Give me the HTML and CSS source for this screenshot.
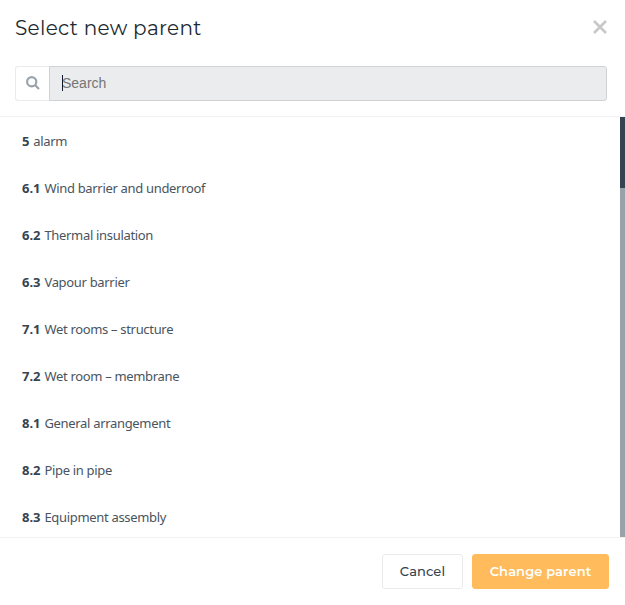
FILE: index.html
```
<!DOCTYPE html>
<html lang="en">
<head>
<meta charset="utf-8"/>
<title>Select new parent</title>
<link rel="stylesheet" href="styles.css">
</head>
<body>
<div class="modal">
	<div class="modal-header">
		<div class="modal-title">
			<h1>Select new parent</h1>
			<button class="close" aria-label="Close">
				<svg width="14" height="14" viewBox="0 0 14 14"><path d="M1 1L13 13M13 1L1 13"/></svg>
			</button>
		</div>
		<div class="search">
			<label class="search-icon" for="search">
				<svg width="14" height="14" viewBox="0 0 14 14"><circle cx="5.7" cy="5.7" r="4.6"/><path d="M9.2 9.2L13 13"/></svg>
			</label>
			<div class="search-field">
				<input id="search" type="text" placeholder="Search"/>
				<span class="caret"></span>
			</div>
		</div>
	</div>
	<div class="modal-body">
		<ul class="list">
			<li><b>5</b> <span>alarm</span></li>
			<li><b>6.1</b> <span>Wind barrier and underroof</span></li>
			<li><b>6.2</b> <span>Thermal insulation</span></li>
			<li><b>6.3</b> <span>Vapour barrier</span></li>
			<li><b>7.1</b> <span>Wet rooms – structure</span></li>
			<li><b>7.2</b> <span>Wet room – membrane</span></li>
			<li><b>8.1</b> <span>General arrangement</span></li>
			<li><b>8.2</b> <span>Pipe in pipe</span></li>
			<li><b>8.3</b> <span>Equipment assembly</span></li>
		</ul>
		<div class="scrollbar"><div class="thumb"></div></div>
	</div>
	<div class="modal-footer">
		<button class="btn btn-cancel">Cancel</button>
		<button class="btn btn-primary">Change parent</button>
	</div>
</div>
</body>
</html>
```
FILE: styles.css
```
* {
	box-sizing: border-box;
}
body {
	margin: 0;
	background: #fff;
	color: #364350;
	font-family: "Segoe UI", "Noto Sans", sans-serif;
	font-size: 13px;
}
.modal {
	display: flex;
	flex-direction: column;
	height: 605px;
	overflow: hidden;
}
.modal-header {
	height: 117px;
	padding: 14px 18px 0 15px;
	border-bottom: 1px solid #f0f1f2;
}
.modal-title {
	display: flex;
	justify-content: space-between;
	height: 52px;
}
h1 {
	margin: 0;
	color: #212930;
	font-family: Montserrat, Inter, sans-serif;
	font-size: 20px;
	font-weight: 400;
	line-height: 28px;
	letter-spacing: 0.3px;
}
.close {
	height: 14px;
	margin: 6px 0 0;
	padding: 0;
	border: 0;
	background: none;
}
.close svg {
	display: block;
	fill: none;
	stroke: #c8c8c8;
	stroke-width: 2.6;
}
.search {
	display: flex;
	height: 35px;
}
.search-icon {
	display: flex;
	align-items: center;
	justify-content: center;
	width: 34px;
	padding-bottom: 2px;
	border: 1px solid #e9ebec;
	border-right: 0;
	border-radius: 3px 0 0 3px;
}
.search-icon svg {
	fill: none;
	stroke: #9ba3aa;
	stroke-width: 2.2;
}
.search-field {
	position: relative;
	flex: 1;
}
.search-field input {
	width: 100%;
	height: 35px;
	padding: 0 12px 2px;
	border: 1px solid #d0d3d6;
	border-radius: 0 3px 3px 0;
	background: #ebeced;
	font-family: "Liberation Sans", Arial, sans-serif;
	font-size: 14px;
}
.search-field input::placeholder {
	color: #757575;
}
.caret {
	position: absolute;
	top: 9px;
	left: 13px;
	width: 1px;
	height: 16px;
	background: #10182a;
}
.modal-body {
	display: flex;
	height: 420px;
	overflow: hidden;
}
.list {
	flex: 1;
	margin: 0;
	padding: 1px 0 0 22px;
	list-style: none;
}
.list li {
	height: 47px;
	line-height: 47px;
}
.list span {
	margin-left: 0.5px;
	color: #485460;
	letter-spacing: -0.32px;
}
.scrollbar {
	width: 5px;
	background: #99a1a9;
}
.thumb {
	height: 71px;
	background: #364350;
}
.modal-footer {
	display: flex;
	justify-content: flex-end;
	gap: 9px;
	height: 68px;
	padding: 16px 16px 0 0;
	border-top: 1px solid #f0f1f2;
}
.btn {
	height: 35px;
	padding: 0 0 2px;
	border: 1px solid #e9ebec;
	border-radius: 3px;
	background: #fff;
	color: #364350;
	font-family: Montserrat, Inter, sans-serif;
	font-size: 13px;
	font-weight: 500;
	letter-spacing: 0.1px;
}
.btn-cancel {
	width: 81px;
}
.btn-primary {
	width: 137px;
	border-color: #ffbb5c;
	background: #ffbb5c;
	color: #fff;
	font-weight: 600;
}
```
